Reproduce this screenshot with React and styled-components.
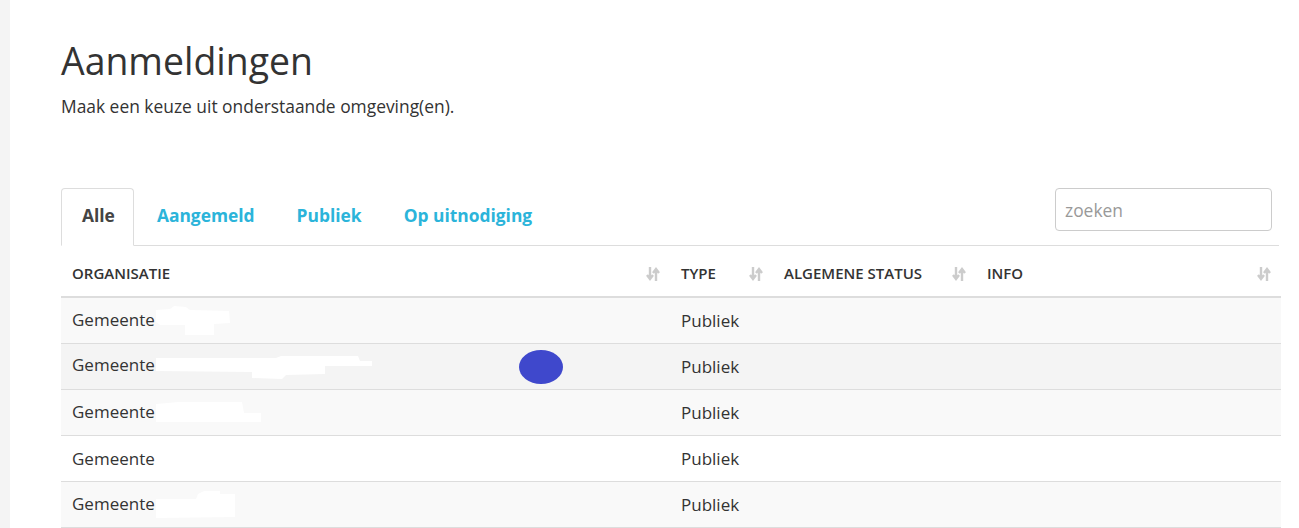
import React from "react";
import styled, { createGlobalStyle } from "styled-components";

const GlobalStyle = createGlobalStyle`
  html, body {
    margin: 0;
    padding: 0;
    background: #fff;
  }
  body {
    font-family: "Open Sans", "Liberation Sans", sans-serif;
    color: #333;
  }
`;

const Page = styled.div`
  display: flex;
  min-height: 100vh;
`;

const SideStrip = styled.div`
  width: 10px;
  flex: 0 0 10px;
  background: #f4f4f4;
`;

const Main = styled.main`
  flex: 1;
  padding: 38px 18px 0 51px;
`;

const Title = styled.h1`
  margin: 0;
  font-size: 37.4px;
  font-weight: 400;
  line-height: 46px;
  color: #333;
`;

const Lead = styled.p`
  margin: 10px 0 0;
  font-size: 17.4px;
  line-height: 24px;
  color: #333;
`;

const TabBar = styled.div`
  display: flex;
  align-items: flex-start;
  justify-content: space-between;
  margin-top: 70px;
  border-bottom: 1px solid #ddd;
  margin-right: 2px;
`;

const Tabs = styled.ul`
  display: flex;
  list-style: none;
  margin: 0 0 -1px;
  padding: 0;
`;

const Tab = styled.li`
  box-sizing: border-box;
  margin-right: 2px;
  padding: 0 18px 5px 20px;
  height: 58px;
  display: flex;
  align-items: center;
  font-size: 17.4px;
  font-weight: 700;
  color: ${(p) => (p.$active ? "#444" : "#2bb4da")};
  border: 1px solid ${(p) => (p.$active ? "#ddd" : "transparent")};
  border-bottom-color: ${(p) => (p.$active ? "#fff" : "transparent")};
  border-radius: 4px 4px 0 0;
  background: ${(p) => (p.$active ? "#fff" : "transparent")};
  cursor: pointer;
`;

const Search = styled.input`
  box-sizing: border-box;
  width: 217px;
  height: 43px;
  margin-right: 7px;
  padding: 6px 9px;
  border: 1px solid #ccc;
  border-radius: 4px;
  font-family: "Open Sans", "Liberation Sans", sans-serif;
  font-size: 17.4px;
  color: #555;
  &::placeholder {
    color: #999;
  }
`;

const Table = styled.table`
  width: 1220px;
  border-collapse: collapse;
  table-layout: fixed;
`;

const Th = styled.th`
  position: relative;
  height: 41px;
  padding: 6px 30px 3px 11px;
  text-align: left;
  font-size: 15px;
  font-weight: 600;
  text-transform: uppercase;
  color: #333;
  border-bottom: 2px solid #ddd;
`;

const SortIcon = styled.svg`
  position: absolute;
  right: 10px;
  top: 50%;
  margin-top: -5px;
  width: 14px;
  height: 16px;
`;

const Row = styled.tr`
  background: ${(p) => p.$bg};
`;

const Td = styled.td`
  position: relative;
  height: 45px;
  padding: 0 11px;
  font-size: 17px;
  color: #333;
  border-bottom: 1px solid #ddd;
  white-space: nowrap;
`;

const Blot = styled.svg`
  display: inline-block;
  vertical-align: middle;
  margin-left: 1px;
`;

const Marker = styled.span`
  position: absolute;
  left: 458px;
  top: 6px;
  width: 44px;
  height: 34px;
  border-radius: 50%;
  background: #3f48cc;
`;

function Sort() {
  return (
    <SortIcon viewBox="0 0 14 16">
      <path d="M4 1v11M1 9l3 4 3-4" stroke="#ccc" strokeWidth="2.4" fill="none" />
      <path d="M10 15V4M7 7l3-4 3 4" stroke="#ccc" strokeWidth="2.4" fill="none" />
    </SortIcon>
  );
}

const blots = [
  { w: 74, h: 30, d: "M0 4 L14 3 L18 0 L30 1 L34 4 L73 5 L74 17 L58 18 L58 29 L29 29 L29 19 L4 19 L0 16 Z" },
  { w: 216, h: 26, d: "M0 4 L120 4 L125 2 L202 2 L204 7 L216 7 L216 12 L169 12 L169 20 L130 21 L126 25 L96 24 L96 18 L0 17 Z" },
  { w: 106, h: 24, d: "M0 3 L12 2 L22 1 L86 1 L88 12 L105 12 L105 21 L0 21 Z" },
  null,
  { w: 80, h: 30, d: "M0 9 L40 9 L42 4 L48 1 L64 1 L64 4 L79 4 L79 27 L0 28 Z" },
];

const rows = [
  { bg: "#f9f9f9" },
  { bg: "#f4f4f4", marker: true },
  { bg: "#f9f9f9" },
  { bg: "#fff" },
  { bg: "#f9f9f9" },
];

export default function App() {
  return (
    <>
      <GlobalStyle />
      <Page>
        <SideStrip />
        <Main>
          <Title>Aanmeldingen</Title>
          <Lead>Maak een keuze uit onderstaande omgeving(en).</Lead>

          <TabBar>
            <Tabs>
              <Tab $active>Alle</Tab>
              <Tab>Aangemeld</Tab>
              <Tab>Publiek</Tab>
              <Tab>Op uitnodiging</Tab>
            </Tabs>
            <Search placeholder="zoeken" />
          </TabBar>

          <Table>
            <colgroup>
              <col style={{ width: 609 }} />
              <col style={{ width: 103 }} />
              <col style={{ width: 203 }} />
              <col style={{ width: 305 }} />
            </colgroup>
            <thead>
              <tr>
                <Th>Organisatie<Sort /></Th>
                <Th>Type<Sort /></Th>
                <Th>Algemene status<Sort /></Th>
                <Th>Info<Sort /></Th>
              </tr>
            </thead>
            <tbody>
              {rows.map((r, i) => {
                const b = blots[i];
                return (
                  <Row key={i} $bg={r.bg}>
                    <Td>
                      Gemeente
                      {b && (
                        <Blot width={b.w} height={b.h} viewBox={`0 0 ${b.w} ${b.h}`}>
                          <path d={b.d} fill="#fff" />
                        </Blot>
                      )}
                      {r.marker && <Marker />}
                    </Td>
                    <Td>Publiek</Td>
                    <Td />
                    <Td />
                  </Row>
                );
              })}
            </tbody>
          </Table>
        </Main>
      </Page>
    </>
  );
}
